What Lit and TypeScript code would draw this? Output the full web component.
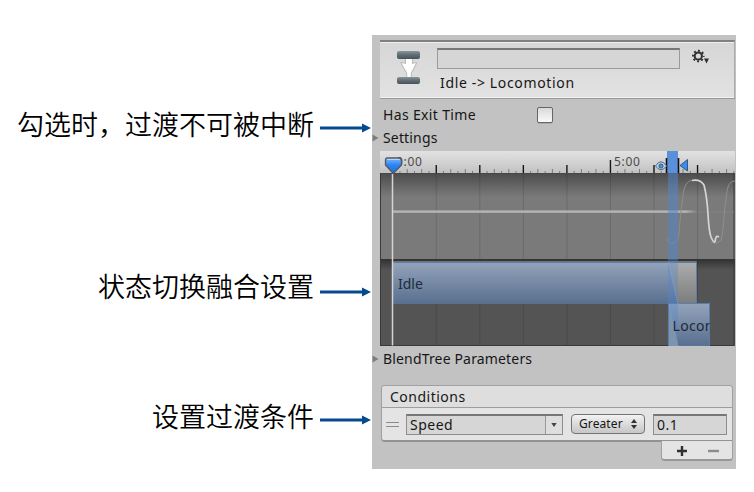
import { LitElement, html, css, svg } from "lit";
import { customElement, property } from "lit/decorators.js";

@customElement("callout-note")
class CalloutNote extends LitElement {
  @property() text = "";
  static styles = css`
    :host { display: flex; justify-content: flex-end; align-items: center; gap: 6px; height: 40px; padding-right: 1px; }
    .text { font: 350 27px/40px "Noto Sans CJK SC", sans-serif; color: #000; white-space: nowrap; }
    .arrow { display: block; flex: none; margin-top: var(--arrow-drop, 5px); }
  `;
  render() {
    return html`<span class="text">${this.text}</span>
      <svg class="arrow" width="51" height="10" viewBox="0 0 51 10">
        <path d="M0 5H43" stroke="#054a91" stroke-width="2.8" />
        <path d="M42 .6L51 5L42 9.4Z" fill="#054a91" />
      </svg>`;
  }
}

@customElement("transition-timeline")
class TransitionTimeline extends LitElement {
  static styles = css`
    :host { display: block; }
    svg { display: block; }
    .time { font: 12px "Noto Sans", sans-serif; fill: #4b4b4b; letter-spacing: 0.7px; }
    .clip { font: 14px "Noto Sans", sans-serif; fill: #202a38; }
  `;
  render() {
    const step = 43.55;
    const ticks = Array.from({ length: 48 }, (_, i) => {
      const x = 12.7 + (i * step) / 6;
      const h = i % 30 === 0 ? 13 : i % 6 === 0 ? 8 : i % 2 === 0 ? 4 : 2;
      return svg`<path d=${`M${x} 22V${22 - h}`} stroke=${i % 6 === 0 ? "#161616" : "#7c7c7c"} stroke-width=${i % 6 === 0 ? 1.4 : 1} />`;
    });
    const grid = Array.from({ length: 7 }, (_, i) =>
      svg`<path d=${`M${12.7 + (i + 1) * step} 23V194`} stroke="#000" stroke-opacity=".13" />`);
    return html`<svg width="355" height="195" viewBox="0 0 355 195">
      <defs>
        <linearGradient id="ruler" x2="0" y2="1"><stop stop-color="#e2e2e2" /><stop offset="1" stop-color="#c2c2c2" /></linearGradient>
        <linearGradient id="shade" x2="0" y2="1"><stop stop-color="#000" stop-opacity=".38" /><stop offset="1" stop-color="#000" stop-opacity="0" /></linearGradient>
        <linearGradient id="blue" x2="0" y2="1"><stop stop-color="#93a3bb" /><stop offset="1" stop-color="#586f8e" /></linearGradient>
        <linearGradient id="grey" x2="0" y2="1"><stop stop-color="#adadad" /><stop offset="1" stop-color="#7c7c7c" /></linearGradient>
        <linearGradient id="pin" x2="0" y2="1"><stop stop-color="#7db9ff" /><stop offset=".45" stop-color="#2d85f2" /><stop offset="1" stop-color="#1a6ee0" /></linearGradient>
        <linearGradient id="fade" gradientUnits="userSpaceOnUse" x1="13" x2="318"><stop stop-color="#b5b5b5" /><stop offset=".96" stop-color="#b5b5b5" /><stop offset="1" stop-color="#b5b5b5" stop-opacity="0" /></linearGradient>
        <clipPath id="second"><rect x="288" y="152" width="41.5" height="43" /></clipPath>
      </defs>
      <rect width="355" height="22" fill="url(#ruler)" />
      ${ticks}
      <rect y="22" width="355" height="87" fill="#7a7a7a" />
      <rect y="109" width="355" height="86" fill="#545454" />
      <rect y="22" width="355" height="24" fill="url(#shade)" />
      <rect y="109" width="355" height="10" fill="url(#shade)" />
      ${grid}
      <path d="M0 22.5H355" stroke="#484848" />
      <path d="M0 109H355" stroke="#353535" stroke-width="2" />
      <path d="M.5 22V194.5H354V22" fill="none" stroke="#393939" />
      <rect x="13" y="59.4" width="305" height="2.4" fill="url(#fade)" />
      <path d="M318 61H354" stroke="#868686" stroke-width=".8" />
      <g fill="none" stroke-linejoin="round">
        <path d="M287 88Q288 93 293 92Q298 91 299 83Q300 65 303 45Q304 31 312 29" stroke="#8e8e8e" />
        <path d="M331 91Q336 94 341 89Q343 83 344 66Q346 43 348 36Q350 30 355 30" stroke="#8e8e8e" />
        <path d="M312 29.5Q320 28 324 34Q327 46 328 63Q329 81 331 86Q335 95 335.5 88Q336 84 339 86" stroke="#d5d5d5" stroke-width="1.7" />
      </g>
      <rect x="13.5" y="110.5" width="303" height="42" fill="url(#grey)" />
      <path d="M13 111H288L298 153H13Z" fill="url(#blue)" />
      <path d="M13.5 111.5H316.5V152.5" fill="none" stroke="#5c7dac" />
      <rect x="288.5" y="152.5" width="41" height="42.5" fill="url(#blue)" stroke="#5c7dac" />
      <path d="M289 155L298 195H289Z" fill="#9a9a9a" />
      <path d="M288 0H298V195H288Z" fill="#4f87cf" fill-opacity=".34" />
      <path d="M288 22H298V109H288Z" fill="#4f87cf" fill-opacity=".25" />
      <path d="M288.5 111L298 153M289 153L298 195" fill="none" stroke="#8ba3c2" stroke-dasharray="1 1" />
      <text class="clip" x="18" y="138">Idle</text>
      <g clip-path="url(#second)"><text class="clip" x="292.5" y="179.5" textLength="81">Locomotion</text></g>
      <text class="time" x="16" y="14.5">0:00</text>
      <text class="time" x="234" y="14.5">5:00</text>
      <rect x="287" width="11" height="22" fill="#5a90d9" />
      <path d="M286.5 7V22M298.5 7V22" stroke="#111" stroke-width="1.6" />
      <path d="M275.5 15Q281 6.5 286.5 15Q281 22.5 275.5 15Z" fill="#c2d5e8" stroke="#476685" />
      <circle cx="281" cy="15" r="2.1" fill="#4a90dd" stroke="#2c5378" stroke-width=".9" />
      <path d="M300 14.5L307.5 8.5V20Z" fill="#398df0" stroke="#385980" />
      <path d="M12.5 23V194.5" stroke="#d5d5d5" stroke-width="1.5" />
      <path d="M7 7H19Q21.5 7 21.5 9.5V14L13.3 22.5L5.5 14V9Q5.5 7 7 7Z" fill="url(#pin)" stroke="#55585d" stroke-width="1.3" />
      <path d="M7.2 8.4H19.8" stroke="#bedaff" stroke-width="1" />
    </svg>`;
  }
}

@customElement("app-root")
class AppRoot extends LitElement {
  static styles = css`
    :host { display: grid; grid-template-columns: 372px 364px; width: 754px; height: 492px; background: #fff; overflow: hidden; color: #161616; font: 14px/20px "Noto Sans", sans-serif; }
    * { box-sizing: border-box; }
    svg { display: block; }
    .notes { display: flex; flex-direction: column; padding-top: 104px; --arrow-drop: 7px; }
    .notes callout-note:nth-child(2) { margin-top: 122px; --arrow-drop: 11px; }
    .notes callout-note:nth-child(3) { margin-top: 90px; --arrow-drop: 8px; }
    .panel { margin-top: 35px; height: 434px; background: #c2c2c2; padding: 5px 1px 0 8px; }
    .head { display: flex; height: 59px; background: linear-gradient(#d6d6d6, #e2e2e2); border-top: 2px solid #808080; border-bottom: 1px solid #999; border-right: 1px solid #aaa; box-shadow: inset 0 1px #eee, inset 0 -1px #f2f2f2; }
    .state { margin: 7px 0 0 14px; flex: none; }
    .names { margin: 6px 0 0 14px; width: 243px; }
    .namebox { height: 21px; border: 1px solid #9a9a9a; border-top: 2px solid #777; background: #d6d6d6; }
    .title { padding-left: 3px; margin-top: 4px; letter-spacing: .65px; white-space: nowrap; }
    .gear { margin: 6px 0 0 11px; }
    .exit { display: flex; align-items: center; height: 32px; padding-left: 3px; }
    .exit span { width: 154px; letter-spacing: .35px; }
    .check { width: 16px; height: 16px; border: 1px solid #666; border-radius: 2px; background: linear-gradient(#d9d9d9, #fafafa); box-shadow: 0 1px #aaa; }
    .fold { display: flex; align-items: center; gap: 4px; margin-left: -8px; height: 20px; line-height: 20px; letter-spacing: .16px; }
    .settings { margin: -3px 0 3px -8px; }
    .params { margin-top: 3px; }
    .conditions { width: 352px; margin: 16px 0 0 1px; height: 57px; background: #e4e4e4; border: 1px solid #a0a0a0; border-radius: 4px 4px 0 4px; border-bottom: 2px solid #929292; box-shadow: inset 0 1px #f1f1f1; }
    .caption { height: 22px; padding-left: 8px; border-bottom: 1px solid #9e9e9e; background: #dedede; border-radius: 4px 4px 0 0; line-height: 21px; letter-spacing: .5px; }
    .row { display: flex; align-items: center; height: 32px; padding-left: 4px; }
    .grip { width: 13px; height: 5px; border: solid #8c8c8c; border-width: 1px 0; }
    .field { display: flex; height: 21px; border: 1px solid #8d8d8d; border-top: 2px solid #777; background: #d6d6d6; line-height: 18px; padding-left: 3px; letter-spacing: .5px; }
    .speed { width: 157px; margin-left: 7px; justify-content: space-between; }
    .drop { width: 17px; display: grid; place-items: center; border-left: 1px solid #999; background: #dedede; }
    .select { display: flex; align-items: center; justify-content: space-between; width: 74px; height: 20px; margin: 0 8px; padding: 0 7px; border: 1px solid #737373; border-radius: 4px; background: linear-gradient(#f2f2f2, #c6c6c6); font-size: 12px; letter-spacing: .1px; }
    .value { width: 74px; }
    .foot { display: flex; align-items: center; justify-content: space-between; width: 72px; height: 20px; margin: -1px 0 0 281px; padding: 1px 13px 0 14px; background: #e4e4e4; border: 1px solid #a0a0a0; border-top: 0; border-bottom: 2px solid #979797; border-radius: 0 0 4px 4px; }
  `;
  fold(name: string, text: string) {
    return html`<div class="fold ${name}"><svg width="7" height="8"><path d="M.5 .5L6.5 4L.5 7.5Z" fill="#7d7d7d" /></svg><span>${text}</span></div>`;
  }
  render() {
    return html`
      <div class="notes">
        <callout-note text="勾选时，过渡不可被中断"></callout-note>
        <callout-note text="状态切换融合设置"></callout-note>
        <callout-note text="设置过渡条件"></callout-note>
      </div>
      <div class="panel">
        <div class="head">
          <svg class="state" width="29" height="40" viewBox="0 0 29 40">
            <defs><linearGradient id="bar" x2="0" y2="1"><stop stop-color="#88969c" /><stop offset=".4" stop-color="#65747b" /><stop offset="1" stop-color="#455158" /></linearGradient></defs>
            <path d="M12 9H18V15L22 14L16.8 24V29H13.2V24L7.5 14L12 15Z" fill="#fff" stroke="#bcbcbc" stroke-width="2.2" stroke-linejoin="round" />
            <path d="M12 9H18V15L22 14L16.8 24V29H13.2V24L7.5 14L12 15Z" fill="#fff" />
            <rect x="3" y="2" width="23" height="8" rx="2" fill="url(#bar)" />
            <rect x="3" y="28" width="23" height="7" rx="2" fill="url(#bar)" />
          </svg>
          <div class="names"><div class="namebox"></div><div class="title">Idle -&gt; Locomotion</div></div>
          <svg class="gear" width="20" height="17" viewBox="0 0 20 17">
            <circle cx="7.3" cy="8" r="3.6" fill="none" stroke="#303030" stroke-width="2" />
            <circle cx="7.3" cy="8" r="5.3" fill="none" stroke="#303030" stroke-width="2" stroke-dasharray="1.9 2.26" stroke-dashoffset=".95" />
            <path d="M13 10.5H18L15.5 15.5Z" fill="#303030" />
          </svg>
        </div>
        <div class="exit"><span>Has Exit Time</span><i class="check"></i></div>
        ${this.fold("settings", "Settings")}
        <transition-timeline></transition-timeline>
        ${this.fold("params", "BlendTree Parameters")}
        <div class="conditions">
          <div class="caption">Conditions</div>
          <div class="row">
            <i class="grip"></i>
            <div class="field speed">Speed<span class="drop"><svg width="6" height="4"><path d="M.3 0H5.7L3 4Z" fill="#444" /></svg></span></div>
            <div class="select">Greater<svg width="6" height="10"><path d="M0 4L3 0L6 4ZM0 6L3 10L6 6Z" fill="#333" /></svg></div>
            <div class="field value">0.1</div>
          </div>
        </div>
        <div class="foot">
          <svg width="12" height="12"><path d="M1 6H11M6 1V11" stroke="#303030" stroke-width="2.4" /></svg>
          <svg width="11" height="12"><path d="M0 6H11" stroke="#8c8c8c" stroke-width="2.4" /></svg>
        </div>
      </div>`;
  }
}
